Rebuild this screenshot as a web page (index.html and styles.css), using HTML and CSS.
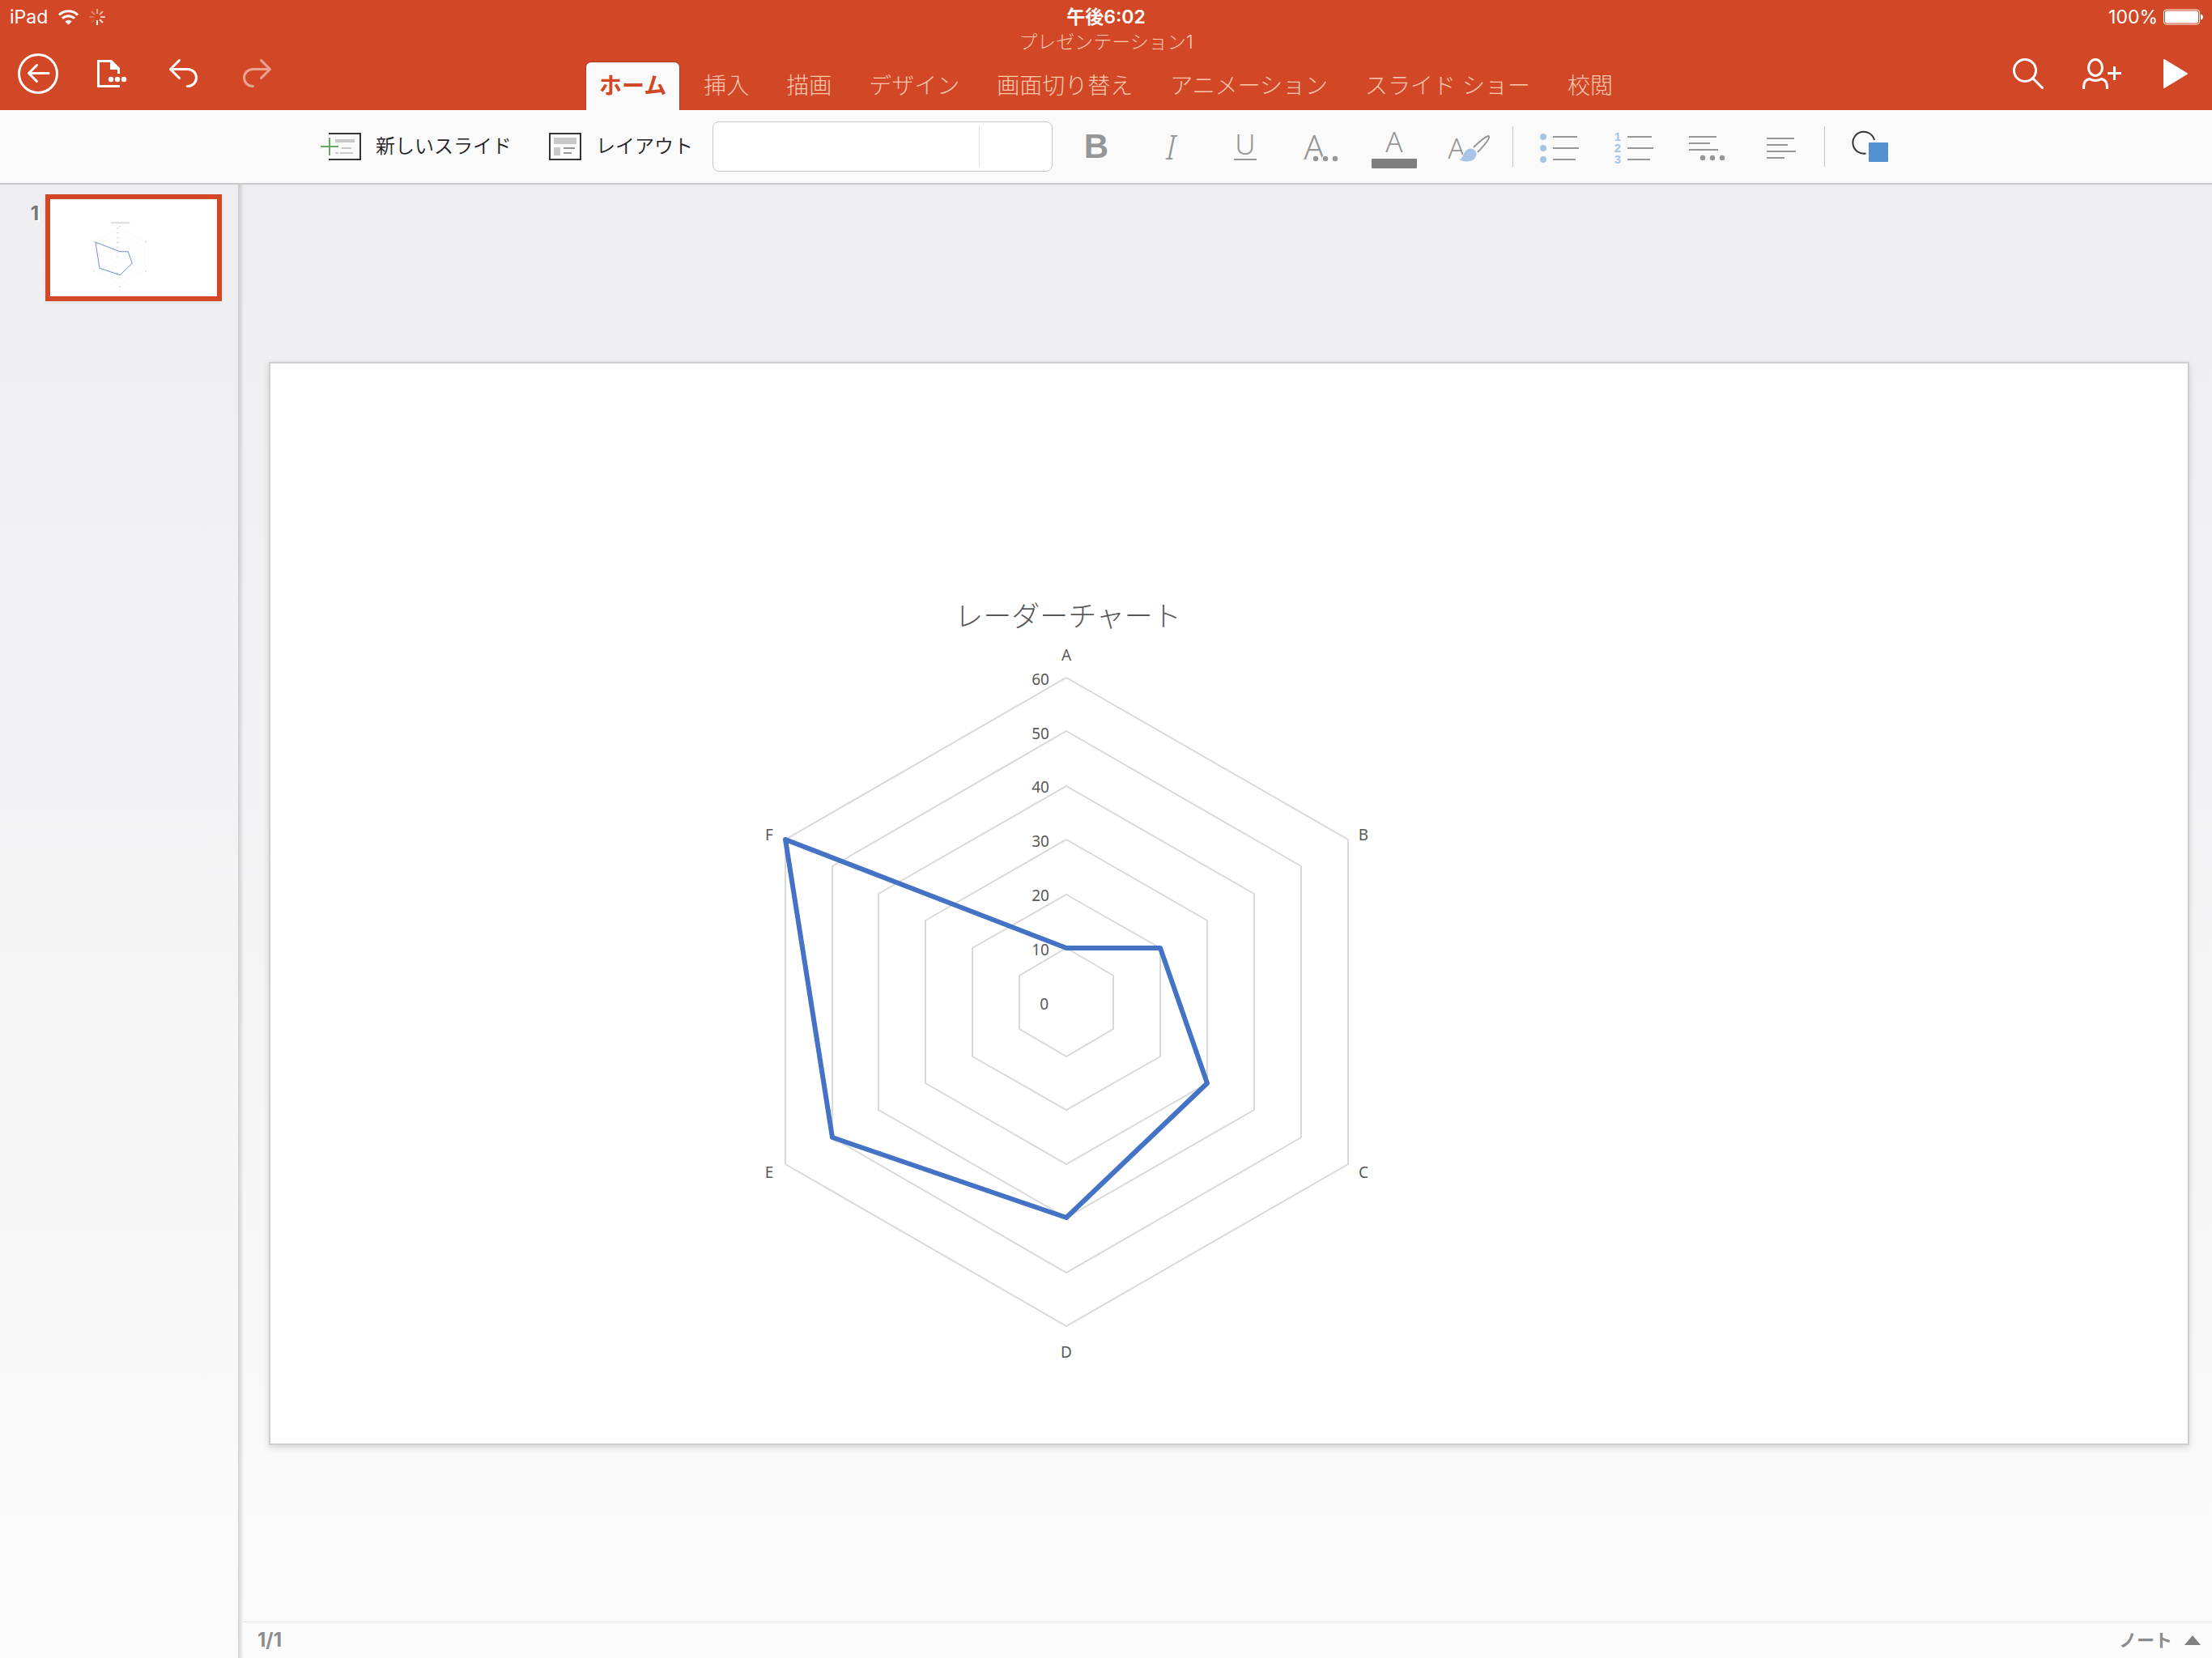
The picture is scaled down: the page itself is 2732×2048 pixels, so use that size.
FILE: index.html
```html
<!DOCTYPE html>
<html lang="ja">
<head>
  <meta charset="UTF-8">
  <title>プレゼンテーション1</title>
  <link rel="stylesheet" href="styles.css">
</head>
<body>
  <header class="header">
    <div class="status-left">
      <span>iPad</span>
      <svg class="wifi" width="25" height="20" viewBox="0 0 25 20" fill="none" stroke="#fff" stroke-width="3">
        <path d="M1 7.500A16.500 16.500 0 0 1 24 7.500"/>
        <path d="M5 11.800A10.600 10.600 0 0 1 20 11.800"/>
        <path d="M12.500 19.500L8.300 15.400A6 6 0 0 1 16.700 15.400Z" fill="#fff" stroke="none"/>
      </svg>
      <svg width="20" height="20" viewBox="-10 -10 20 20" stroke="#fff" stroke-width="2">
        <path d="M0 4V10"/>
        <path d="M3 3L7 7" opacity=".85"/>
        <path d="M4 0H10" opacity=".7"/>
        <path d="M3 -3L7 -7" opacity=".6"/>
        <path d="M0 -4V-10" opacity=".5"/>
        <path d="M-3 -3L-7 -7" opacity=".35"/>
        <path d="M-4 0H-10" opacity=".25"/>
        <path d="M-3 3L-7 7" opacity=".12"/>
      </svg>
    </div>
    <div class="clock">午後6:02</div>
    <div class="status-right">
      <span>100%</span>
      <svg width="49" height="20" viewBox="0 0 49 20">
        <rect x="0.500" y="1" width="44" height="18" rx="3" fill="none" stroke="#fff"/>
        <rect x="2" y="2.500" width="41" height="15" rx="2" fill="#fff"/>
        <path d="M46 6.500C50 7.500 50 12.500 46 13.500Z" fill="#fff"/>
      </svg>
    </div>

    <nav class="actions actions-left">
      <button type="button" aria-label="戻る">
        <svg viewBox="0 0 50 50" stroke-width="3">
          <circle cx="25" cy="25" r="23.500"/>
          <path d="M38 24.500H13.500M23.500 14.500L13.500 24.500L23.500 34.500"/>
        </svg>
      </button>
      <button type="button" aria-label="ファイル">
        <svg class="square-ends" viewBox="0 0 50 50" stroke-width="3">
          <path d="M36 40.500H9.500V9.500H25"/>
          <path d="M24 8H26L36 18V25H33V20H24Z" fill="#fff" stroke="none"/>
          <g fill="#fff" stroke="none">
            <circle cx="25" cy="32" r="3.200"/>
            <circle cx="33" cy="32" r="3.200"/>
            <circle cx="41" cy="32" r="3.200"/>
          </g>
        </svg>
      </button>
      <button type="button" aria-label="元に戻す">
        <svg viewBox="0 0 50 50" stroke-width="3">
          <path d="M19.500 8.500L8.500 19.500L19.500 30.500M8.500 19.500H30A10.500 10.500 0 0 1 30 40.500H29.500"/>
        </svg>
      </button>
      <button type="button" class="dimmed" aria-label="やり直し">
        <svg viewBox="0 0 50 50" stroke-width="3">
          <path d="M30.500 8.500L41.500 19.500L30.500 30.500M41.500 19.500H20A10.500 10.500 0 0 0 20 40.500H20.500"/>
        </svg>
      </button>
    </nav>
    <h1 class="doc-title">プレゼンテーション1</h1>
    <nav class="tabs">
      <a href="#home" class="tab active">ホーム</a>
      <a href="#insert" class="tab">挿入</a>
      <a href="#draw" class="tab">描画</a>
      <a href="#design" class="tab">デザイン</a>
      <a href="#transitions" class="tab">画面切り替え</a>
      <a href="#animations" class="tab">アニメーション</a>
      <a href="#slideshow" class="tab">スライド ショー</a>
      <a href="#review" class="tab">校閲</a>
    </nav>
    <nav class="actions actions-right">
      <button type="button" aria-label="検索">
        <svg viewBox="0 0 50 50" stroke-width="3">
          <circle cx="19" cy="21" r="13.500"/>
          <path d="M28.500 30.500L40.500 42.500"/>
        </svg>
      </button>
      <button type="button" aria-label="共有">
        <svg class="square-ends" viewBox="0 0 50 50" stroke-width="3">
          <ellipse cx="16" cy="17.500" rx="8.500" ry="10"/>
          <path d="M1.500 44C1.500 36 3 33 8.500 31.500Q16 35.500 23.500 31.500C29 33 30.500 36 30.500 44"/>
          <path d="M31 24.500H48M39.500 16V33"/>
        </svg>
      </button>
      <button type="button" aria-label="スライド ショーの開始">
        <svg viewBox="0 0 50 50" stroke-width="2">
          <path d="M11 8L39 25L11 42Z" fill="#fff"/>
        </svg>
      </button>
    </nav>
  </header>

  <div class="toolbar">
    <button type="button" class="labeled">
      <svg width="50" height="34" viewBox="0 0 50 34">
        <path d="M10 1H49V33H10" fill="none" stroke="#333" stroke-width="2"/>
        <path d="M18 8H42V12H18ZM26 18H38V20H26ZM18 24H22V26H18ZM24 24H40V26H24Z" fill="#c8c8c8"/>
        <path d="M0 17H22M11 6V28" stroke="#6aa964" stroke-width="2"/>
      </svg>
      新しいスライド
    </button>
    <button type="button" class="labeled">
      <svg width="40" height="34" viewBox="0 0 40 34">
        <rect x="1" y="1" width="38" height="32" fill="none" stroke="#333" stroke-width="2"/>
        <path d="M6 6H34V14H6ZM6 18H14V28H6Z" fill="#c8c8c8"/>
        <path d="M18 19H32M18 25H28" stroke="#969696" stroke-width="2"/>
      </svg>
      レイアウト
    </button>
    <div class="font-box">
      <input type="text" class="font-name" aria-label="フォント">
      <input type="text" class="font-size" aria-label="フォント サイズ">
    </div>
    <button type="button" class="tool bold">B</button>
    <button type="button" class="tool italic">I</button>
    <button type="button" class="tool" aria-label="下線">
      <svg viewBox="0 0 56 50">
        <text x="28" y="35" class="letter-mid">U</text>
        <path d="M14 41H42" stroke="#969696" stroke-width="2"/>
      </svg>
    </button>
    <button type="button" class="tool" aria-label="文字書式">
      <svg viewBox="0 0 56 50">
        <text x="21" y="41" class="letter-big">A</text>
        <g fill="#969696" stroke="#fafafa" stroke-width="3" paint-order="stroke">
          <circle cx="23" cy="40" r="3.200"/>
          <circle cx="35" cy="40" r="3.200"/>
          <circle cx="47" cy="40" r="3.200"/>
        </g>
      </svg>
    </button>
    <button type="button" class="tool" aria-label="フォントの色">
      <svg viewBox="0 0 56 50">
        <text x="28" y="32" class="letter-mid">A</text>
        <rect x="0" y="40" width="56" height="12" rx="1" fill="#7f7f7f"/>
      </svg>
    </button>
    <button type="button" class="tool" aria-label="書式のコピー">
      <svg viewBox="0 0 56 50">
        <text x="13" y="40" class="letter-mid">A</text>
        <path d="M34 26C41 19 47 13.500 52 12C54 12 53 15 51 18C47 24 43 28 39 32" fill="none" stroke="#969696" stroke-width="2"/>
        <path d="M16 41.500C22 41 20 29 30 27.500C34 27.500 38 31 37.500 35C36 43.500 26 45.500 16 41.500Z" fill="#a5c4e7" stroke="#fafafa" stroke-width="2" paint-order="stroke"/>
      </svg>
    </button>
    <span class="divider"></span>
    <button type="button" class="tool" aria-label="箇条書き">
      <svg viewBox="0 0 56 50">
        <g fill="#a5c4e7">
          <circle cx="11" cy="13" r="4"/>
          <circle cx="11" cy="27" r="4"/>
          <circle cx="11" cy="41" r="4"/>
        </g>
        <path d="M23 13H53M23 27H55M23 41H51" stroke="#969696" stroke-width="2"/>
      </svg>
    </button>
    <button type="button" class="tool" aria-label="段落番号">
      <svg viewBox="0 0 56 50">
        <g class="digits">
          <text x="11" y="18">1</text>
          <text x="11" y="32">2</text>
          <text x="11" y="46">3</text>
        </g>
        <path d="M23 13H53M23 27H55M23 41H51" stroke="#969696" stroke-width="2"/>
      </svg>
    </button>
    <button type="button" class="tool" aria-label="段落書式">
      <svg viewBox="0 0 56 50">
        <path d="M7 13H41M7 21H33M7 29H43" stroke="#969696" stroke-width="2"/>
        <g fill="#969696">
          <circle cx="24" cy="39" r="3.200"/>
          <circle cx="36" cy="39" r="3.200"/>
          <circle cx="48" cy="39" r="3.200"/>
        </g>
      </svg>
    </button>
    <button type="button" class="tool" aria-label="左揃え">
      <svg viewBox="0 0 56 50">
        <path d="M11 15H45M11 23H37M11 31H47M11 39H33" stroke="#969696" stroke-width="2"/>
      </svg>
    </button>
    <span class="divider"></span>
    <button type="button" class="tool" aria-label="図形">
      <svg viewBox="0 0 56 50">
        <path d="M24.500 33.500A13.500 13.500 0 1 1 35 17" fill="none" stroke="#333" stroke-width="2"/>
        <rect x="28" y="20" width="24" height="24" rx="1" fill="#5290d2"/>
      </svg>
    </button>
  </div>

  <div class="workspace">
    <ol class="sidebar">
      <li class="slide-item">
        <span class="slide-number">1</span>
        <button type="button" class="thumb" aria-label="スライド 1">
          <svg viewBox="0 0 2368 1334">
            <use href="#radar" x="990" y="789" class="mini"/>
            <path d="M-130 -476H140M-10 -425H10M-42 -400H-20M-42 -333H-20M-42 -266H-20M-42 -199H-20M-42 -132H-20M-42 -65H-20M-36 2H-22M357 -206H377M357 210H377M-10 432H10M-377 210H-357M-377 -206H-357" transform="translate(990 789)" stroke="#ccc" stroke-width="14"/>
          </svg>
        </button>
      </li>
    </ol>

    <main class="editor">
      <div class="canvas">
        <div class="slide">
          <svg viewBox="0 0 2368 1334">
            <defs>
              <g id="radar" fill="none">
                <g class="grid-line">
                  <path d="M0 -67L58 -33V33L0 67L-58 33V-33Z"/>
                  <path d="M0 -133L116 -67V67L0 133L-116 67V-67Z"/>
                  <path d="M0 -201L174 -101V100L0 200L-174 100V-101Z"/>
                  <path d="M0 -267L232 -134V133L0 266L-232 133V-134Z"/>
                  <path d="M0 -335L290 -168V167L0 334L-289 167V-168Z"/>
                  <path d="M0 -401L348 -201V200L0 400L-347 200V-201Z"/>
                </g>
                <path class="series" d="M0 -67H116L174 100L0 266L-289 167L-347 -201Z"/>
              </g>
            </defs>
            <use href="#radar" x="983" y="789"/>
            <g transform="translate(983 789)">
              <text class="chart-title" x="2" y="-464">レーダーチャート</text>
              <g class="category">
                <text x="0" y="-422">A</text>
                <text x="367" y="-200">B</text>
                <text x="367" y="217">C</text>
                <text x="0" y="439">D</text>
                <text x="-367" y="217">E</text>
                <text x="-367" y="-200">F</text>
              </g>
              <g class="axis">
                <text x="-21" y="-392">60</text>
                <text x="-21" y="-325">50</text>
                <text x="-21" y="-259">40</text>
                <text x="-21" y="-192">30</text>
                <text x="-21" y="-125">20</text>
                <text x="-21" y="-58">10</text>
                <text x="-22" y="9">0</text>
              </g>
            </g>
          </svg>
        </div>
      </div>
      <footer class="footer">
        <span class="page-count">1/1</span>
        <button type="button" class="notes">
          ノート
          <svg width="20" height="12" viewBox="0 0 20 12"><path d="M10 0L20 12H0Z" fill="#808080"/></svg>
        </button>
      </footer>
    </main>
  </div>
</body>
</html>
```
FILE: styles.css
```css
* {
  box-sizing: border-box;
}

body {
  margin: 0;
  min-height: 100vh;
  display: flex;
  flex-direction: column;
  font-family: Inter, "Noto Sans CJK JP", sans-serif;
  background: #f4f4f6;
}

button {
  padding: 0;
  border: none;
  background: none;
  font-family: inherit;
  color: inherit;
  cursor: pointer;
}

svg {
  display: block;
  overflow: visible;
}

/* header */
.header {
  display: grid;
  grid-template-columns: 1fr auto 1fr;
  grid-template-rows: 41px 22px 73px;
  background: #d24726;
  color: #fff;
}

.status-left,
.status-right {
  display: flex;
  align-items: center;
  font-size: 23px;
  line-height: 30px;
}

.status-left {
  padding-left: 12px;
  gap: 13px;
}

.status-right {
  justify-content: flex-end;
  padding-right: 11px;
  gap: 7px;
}

.clock {
  align-self: center;
  text-align: center;
  font-size: 23px;
  line-height: 30px;
  font-weight: 600;
}

.actions {
  grid-row: 2 / 4;
  display: flex;
  align-items: center;
  padding-top: 5px;
}

.actions-left {
  grid-column: 1;
  padding-left: 2px;
}

.actions-right {
  grid-column: 3;
  justify-content: flex-end;
}

.actions button {
  width: 90px;
  display: flex;
  justify-content: center;
}

.actions svg {
  width: 50px;
  height: 50px;
  fill: none;
  stroke: #fff;
  stroke-linecap: round;
  stroke-linejoin: round;
}

.actions .square-ends {
  stroke-linecap: butt;
  stroke-linejoin: miter;
}

.actions .dimmed {
  opacity: 0.5;
}

.doc-title {
  grid-column: 2;
  grid-row: 2;
  margin: 0;
  text-align: center;
  font-size: 23px;
  line-height: 22px;
  font-weight: 300;
  color: #fbc9b0;
}

.tabs {
  grid-column: 2;
  grid-row: 3;
  display: flex;
  align-items: flex-end;
  gap: 14px;
}

.tab {
  height: 59px;
  padding: 0 16px;
  border-radius: 6px 6px 0 0;
  font-size: 28px;
  line-height: 59px;
  font-weight: 300;
  color: #fbc9b0;
  text-decoration: none;
  white-space: nowrap;
}

.tab.active {
  background: #fafafa;
  color: #d24726;
  font-weight: 700;
  box-shadow: 0 0 0 1px #b03a1d;
  clip-path: inset(-1px -1px 0 -1px);
}

/* toolbar */
.toolbar {
  display: flex;
  align-items: center;
  justify-content: center;
  height: 92px;
  background: #fafafa;
  border-bottom: 2px solid #cbcbcd;
}

.labeled {
  display: flex;
  align-items: center;
  gap: 18px;
  height: 62px;
  padding: 0 18px;
  font-size: 24px;
  line-height: 36px;
  font-weight: 350;
  color: #222;
  white-space: nowrap;
}

.labeled + .labeled {
  margin-left: 10px;
}

.font-box {
  display: flex;
  align-items: center;
  width: 420px;
  height: 62px;
  margin: 0 8px 0 6px;
  background: #fff;
  border: 1px solid #c8c8c8;
  border-radius: 8px;
}

.font-box input {
  height: 50px;
  padding: 0 12px;
  border: none;
  background: none;
  font-size: 24px;
  outline: none;
}

.font-name {
  flex: 1;
  min-width: 0;
}

.font-box .font-size {
  width: 90px;
  border-left: 1px solid #e0e0e0;
}

.tool {
  display: flex;
  align-items: center;
  justify-content: center;
  width: 92px;
  height: 62px;
  font-size: 42px;
  line-height: 50px;
  color: #969696;
}

.tool svg {
  width: 56px;
  height: 50px;
}

.tool text {
  fill: #969696;
  text-anchor: middle;
  font-family: "Noto Sans", sans-serif;
  font-weight: 300;
}

.bold {
  font-family: "Liberation Sans", Arial, sans-serif;
  font-weight: 700;
}

.italic {
  font-family: "Noto Sans", sans-serif;
  font-style: italic;
  font-weight: 300;
}

.letter-mid {
  font-size: 35px;
}

.tool .letter-big {
  font-size: 42px;
}

.tool .digits text {
  fill: #a5c4e7;
  font-family: "Liberation Sans", Arial, sans-serif;
  font-size: 15px;
  font-weight: 700;
}

.divider {
  width: 1px;
  height: 50px;
  margin: 0 8px;
  background: #c8c8c8;
}

/* workspace */
.workspace {
  flex: 1;
  display: flex;
  background: linear-gradient(#eeeef1, #fbfbfb);
}

.sidebar {
  width: 294px;
  margin: 0;
  padding: 12px 20px 12px 18px;
  list-style: none;
}

.slide-item {
  display: flex;
  align-items: flex-start;
  justify-content: space-between;
}

.slide-number {
  width: 30px;
  padding-top: 9px;
  text-align: right;
  font-size: 24px;
  line-height: 30px;
  font-weight: 700;
  color: #777;
  text-shadow: 2px 2px 0 #fff;
}

.thumb {
  width: 218px;
  height: 132px;
  border: 6px solid #d24726;
  background: #fff;
  box-shadow: 0 2px 4px rgba(0,0,0,0.06);
}

.thumb svg {
  width: 100%;
  height: 100%;
}

.editor {
  flex: 1;
  min-width: 0;
  display: flex;
  flex-direction: column;
  box-shadow: inset 6px 0 4px -2px rgba(0,0,0,0.14);
}

.canvas {
  flex: 1;
  display: flex;
  align-items: center;
  padding: 0 28px 0 38px;
}

.slide {
  width: 100%;
  background: #fff;
  border: 2px solid #cfcfcf;
  box-shadow: 0 3px 8px rgba(0,0,0,0.14);
}

.slide svg {
  width: 100%;
}

.grid-line {
  stroke: #d9d9d9;
  stroke-width: 2;
}

.series {
  stroke: #4472c4;
  stroke-width: var(--series-width, 6);
  stroke-linejoin: round;
}

.mini {
  --series-width: 9;
}

.chart-title {
  text-anchor: middle;
  font-family: "Liberation Serif", "Noto Sans CJK JP", serif;
  font-size: 35px;
  font-weight: 300;
  fill: #595959;
}

.category text,
.axis text {
  font-family: "Noto Sans", sans-serif;
  font-size: 19px;
  fill: #595959;
}

.category text {
  text-anchor: middle;
}

.axis text {
  text-anchor: end;
}

.footer {
  display: flex;
  align-items: center;
  justify-content: space-between;
  height: 45px;
  margin-left: 6px;
  padding: 0 14px 0 18px;
  background: #fcfcfc;
  border-top: 1px solid #e3e3e3;
  color: #8c8c8c;
}

.page-count {
  font-size: 24px;
  line-height: 30px;
  font-weight: 700;
}

.notes {
  display: flex;
  align-items: center;
  gap: 15px;
  font-size: 22px;
  line-height: 30px;
  font-weight: 600;
}
```
